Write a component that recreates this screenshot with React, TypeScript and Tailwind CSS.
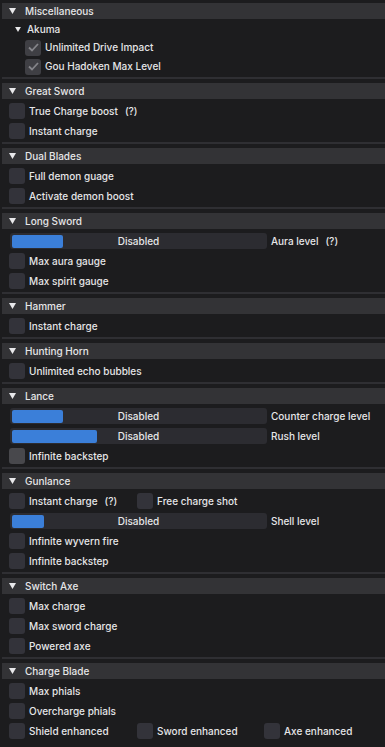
import { ReactNode } from "react";

const font = { fontFamily: "Inter, 'Noto Sans', sans-serif" };

const Arrow = ({ small }: { small?: boolean }) => (
    <svg width={small ? 6 : 7} height={small ? 5 : 6} viewBox="0 0 7 6" className="shrink-0">
        <path d="M0 0 L7 0 L3.5 6 Z" fill="#e8e8ea" />
    </svg>
);

const Box = ({ checked, light }: { checked?: boolean; light?: boolean }) => (
    <div
        className={`w-4 h-4 shrink-0 rounded-[3px] flex items-center justify-center ${checked ? "bg-[#3f3f44]" : light ? "bg-[#48484c]" : "bg-[#33333a]"}`}
    >
        {checked && (
            <svg width="11" height="9" viewBox="0 0 11 9">
                <path d="M1 4.5 L4 7.5 L10 1" stroke="#85858a" strokeWidth="1.8" fill="none" />
            </svg>
        )}
    </div>
);

const Check = ({ label, checked, light, width }: { label: ReactNode; checked?: boolean; light?: boolean; width?: string }) => (
    <div className={`flex items-center gap-[4px] ${width ?? ""}`}>
        <Box checked={checked} light={light} />
        <span>{label}</span>
    </div>
);

const Row = ({ children }: { children: ReactNode }) => (
    <div className="h-5 flex items-center pl-[9px]">{children}</div>
);

const Slider = ({ grab, label }: { grab: number; label: ReactNode }) => (
    <Row>
        <div className="relative ml-[1px] w-[257px] h-4 p-[1.5px] bg-[#2c2c31] rounded-[3px]">
            <div className="h-full bg-[#3b7fd9] rounded-[2px]" style={{ width: grab }} />
            <span className="absolute inset-0 flex items-center justify-center">Disabled</span>
        </div>
        <span className="ml-[4px]">{label}</span>
    </Row>
);

const Help = ({ text }: { text: string }) => (
    <>
        {text}
        <span className="ml-[7px]">(?)</span>
    </>
);

const Section = ({ title, children, last }: { title: string; children: ReactNode; last?: boolean }) => (
    <section>
        <header className="ml-[2px] h-4 bg-[#333336] flex items-center gap-[9px] pl-[7px]">
            <Arrow />
            <span>{title}</span>
        </header>
        <div className="mt-[2px]">{children}</div>
        {!last && <div className="ml-[2px] mt-[0.5px] mb-[4.5px] h-[2px] bg-[#2f2f33]" />}
    </section>
);

const App = () => {
    return (
        <div
            className="w-[385px] h-[747px] overflow-hidden bg-[#1c1c1e] text-[#e6e6e8] text-[10px] font-medium pt-[3px] select-none"
            style={font}
        >
            <Section title="Miscellaneous">
                <div className="h-[17px] flex items-center pl-[15px] gap-[6px]">
                    <Arrow small />
                    <span>Akuma</span>
                </div>
                <div className="h-[19px] flex items-center pl-[25px]">
                    <Check label="Unlimited Drive Impact" checked />
                </div>
                <div className="h-[19px] flex items-center pl-[25px]">
                    <Check label="Gou Hadoken Max Level" checked />
                </div>
            </Section>

            <Section title="Great Sword">
                <Row><Check label={<Help text="True Charge boost" />} /></Row>
                <Row><Check label="Instant charge" /></Row>
            </Section>

            <Section title="Dual Blades">
                <Row><Check label="Full demon guage" /></Row>
                <Row><Check label="Activate demon boost" /></Row>
            </Section>

            <Section title="Long Sword">
                <Slider grab={51} label={<Help text="Aura level" />} />
                <Row><Check label="Max aura gauge" /></Row>
                <Row><Check label="Max spirit gauge" /></Row>
            </Section>

            <Section title="Hammer">
                <Row><Check label="Instant charge" /></Row>
            </Section>

            <Section title="Hunting Horn">
                <Row><Check label="Unlimited echo bubbles" /></Row>
            </Section>

            <Section title="Lance">
                <Slider grab={51} label="Counter charge level" />
                <Slider grab={85} label="Rush level" />
                <Row><Check label="Infinite backstep" light /></Row>
            </Section>

            <Section title="Gunlance">
                <Row>
                    <Check label={<Help text="Instant charge" />} width="w-[128px]" />
                    <Check label="Free charge shot" />
                </Row>
                <Slider grab={32} label="Shell level" />
                <Row><Check label="Infinite wyvern fire" /></Row>
                <Row><Check label="Infinite backstep" /></Row>
            </Section>

            <Section title="Switch Axe">
                <Row><Check label="Max charge" /></Row>
                <Row><Check label="Max sword charge" /></Row>
                <Row><Check label="Powered axe" /></Row>
            </Section>

            <Section title="Charge Blade" last>
                <Row><Check label="Max phials" /></Row>
                <Row><Check label="Overcharge phials" /></Row>
                <Row>
                    <Check label="Shield enhanced" width="w-[128px]" />
                    <Check label="Sword enhanced" width="w-[127px]" />
                    <Check label="Axe enhanced" />
                </Row>
            </Section>
        </div>
    );
};

export default App;
